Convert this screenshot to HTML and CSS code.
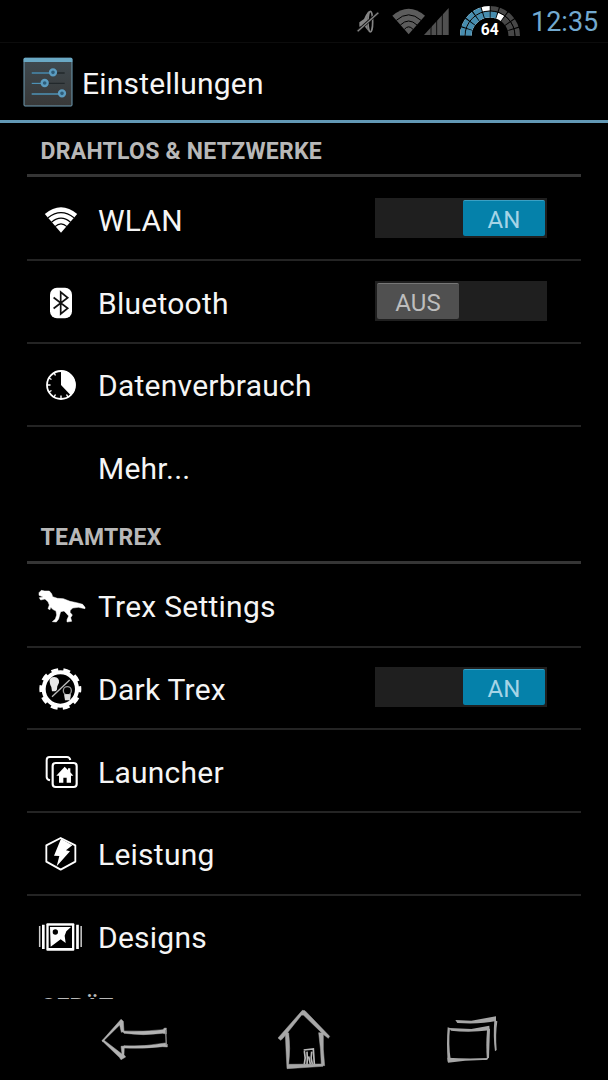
FILE: index.html
```html
<!DOCTYPE html>
<html lang="de">
<head>
  <meta charset="UTF-8">
  <meta name="viewport" content="width=device-width, initial-scale=1.0">
  <title>Einstellungen</title>
  <link rel="stylesheet" href="styles.css">
</head>
<body>
  <div class="screen">

    <div class="status-bar">
      <svg class="status-icons" viewBox="0 0 540 129">
        <!-- muted speaker -->
        <g fill="#858585">
          <path d="M58 67L72 57Q78 42 84 35L88 34Q78 60 84 92L73 78L58 80Z"/>
          <ellipse cx="91" cy="65" rx="7" ry="31" fill="none" stroke="#858585" stroke-width="5"/>
          <path d="M52 94L115 38" stroke="#111" stroke-width="9"/>
          <path d="M53 94L115 38" stroke="#858585" stroke-width="4"/>
        </g>
        <!-- wifi -->
        <path d="M206 103L157 47Q206 5 255 47Z" fill="#5c5c5c"/>
        <g fill="none" stroke="#000" stroke-width="3">
          <path d="M169 61Q206 28 243 61"/>
          <path d="M181 75Q206 51 231 75"/>
          <path d="M193 88Q206 73 219 88"/>
        </g>
        <!-- signal -->
        <path d="M252 105L326 24V105Z" fill="#505050"/>
        <path d="M273 70V106M290 50V106M307 30V106" stroke="#000" stroke-width="2.5"/>
        <!-- battery gauge -->
        <g fill="none">
          <path d="M367 108A83 83 0 0 1 533 108" stroke="#474747" stroke-width="14"/>
          <path d="M367 108A83 83 0 0 1 533 108" stroke="#fff" stroke-width="14" pathLength="100" stroke-dasharray="50 100"/>
          <path d="M367 108A83 83 0 0 1 533 108" stroke="#478daf" stroke-width="14" pathLength="100" stroke-dasharray="40 100"/>
          <path d="M385 108A65 65 0 0 1 515 108" stroke="#474747" stroke-width="19"/>
          <path d="M385 108A65 65 0 0 1 515 108" stroke="#fff" stroke-width="19" pathLength="100" stroke-dasharray="70 100"/>
          <path d="M385 108A65 65 0 0 1 515 108" stroke="#478daf" stroke-width="19" pathLength="100" stroke-dasharray="60 100"/>
          <path d="M376 108A74 74 0 0 1 524 108" stroke="#000" stroke-width="40" pathLength="100" stroke-dasharray="1.2 8.8" stroke-dashoffset=".6"/>
          <path d="M375 108A75 75 0 0 1 525 108" stroke="#000" stroke-width="3"/>
        </g>
        <text class="gauge-text" x="449" y="104" text-anchor="middle">64</text>
      </svg>
      <span class="clock">12:35</span>
    </div>

    <div class="action-bar">
      <svg class="app-icon" viewBox="0 0 150 150">
        <defs>
          <linearGradient id="panel" x1="0" y1="0" x2="0" y2="1">
            <stop offset="0" stop-color="#3f4a50"/>
            <stop offset="1" stop-color="#383838"/>
          </linearGradient>
        </defs>
        <rect x="3" y="4" width="144" height="143" rx="3" fill="url(#panel)" stroke="#6f9cb3" stroke-width="3"/>
        <path d="M2 6Q2 2 6 2H144Q148 2 148 6V15H2Z" fill="#6aa9c5"/>
        <path d="M26 48H125M26 79H125" stroke="#22282b" stroke-width="4"/>
        <path d="M26 48H85M26 79H60M26 111H112" stroke="#4e91b5" stroke-width="4"/>
        <g fill="#2e5c78" stroke="#5b9cc0" stroke-width="7">
          <circle cx="90" cy="46" r="9"/>
          <circle cx="65" cy="78" r="9"/>
          <circle cx="117" cy="109" r="9"/>
        </g>
      </svg>
      <h1 class="title">Einstellungen</h1>
    </div>

    <div class="settings">
      <h2 class="category">DRAHTLOS &amp; NETZWERKE</h2>
      <div class="row">
        <svg class="icon" viewBox="-28 -28 56 56">
          <path d="M0 12.8L-16.2 -6Q0 -19.5 16.2 -6Z" fill="#fff"/>
          <g fill="none" stroke="#000" stroke-width="1.2">
            <path d="M-13 -2.3Q0 -12.5 13 -2.3"/>
            <path d="M-9.5 2.2Q0 -5.8 9.5 2.2"/>
            <path d="M-6 6.6Q0 1 6 6.6"/>
          </g>
        </svg>
        <span class="label">WLAN</span>
        <span class="switch on"><span class="thumb">AN</span></span>
      </div>
      <div class="row">
        <svg class="icon" viewBox="-28 -28 56 56">
          <rect x="-11" y="-15.2" width="22" height="30.4" rx="7" fill="#fff"/>
          <path d="M-7.4 -5.5L6.7 5.2L-.3 11V-11L6.7 -5.2L-7.4 5.5" fill="none" stroke="#111" stroke-width="1.7"/>
        </svg>
        <span class="label">Bluetooth</span>
        <span class="switch"><span class="thumb">AUS</span></span>
      </div>
      <div class="row">
        <svg class="icon" viewBox="-28 -28 56 56">
          <circle cx="0" cy="0" r="14" fill="none" stroke="#fff" stroke-width="1.8"/>
          <path d="M0 0V-14.5A14.5 14.5 0 0 1 10 10.5Z" fill="#fff"/>
          <path d="M-14 0H-10.5M0 14V10.5M-7 -12.1L-5.5 -9.5M-12.1 -7L-9.5 -5.5M-12.1 7L-9.5 5.5M-7 12.1L-5.5 9.5M7 12.1L5.5 9.5" stroke="#fff" stroke-width="1.4"/>
        </svg>
        <span class="label">Datenverbrauch</span>
      </div>
      <div class="row last">
        <span class="icon"></span>
        <span class="label">Mehr...</span>
      </div>

      <h2 class="category">TEAMTREX</h2>
      <div class="row">
        <svg class="icon" viewBox="39 189 168 168">
          <path d="M57 233L64 226L74 228L88 228L95 236L98 245L112 250L130 251L150 259L170 263L188 268L195 277V281L175 277L158 279L151 286L150 292L157 300L152 308L155 319L141 321V314L146 303L138 294L132 288L122 290L119 300L116 312L109 321L97 320L106 312L110 300L108 288L98 283L92 276L90 284L84 281L88 270L84 260L75 252L62 255L58 248L70 246L57 241Z" fill="#fff" stroke="#fff" stroke-width="1.5"/>
        </svg>
        <span class="label">Trex Settings</span>
      </div>
      <div class="row">
        <svg class="icon" viewBox="39 33 168 168">
          <g fill="none" stroke="#fff">
            <circle cx="121" cy="117" r="50" stroke-width="12"/>
            <circle cx="121" cy="117" r="57.5" stroke-width="11" pathLength="100" stroke-dasharray="5.6 4.4" stroke-dashoffset="2.8"/>
          </g>
          <path d="M89 96Q87 81 103 81Q119 83 117 98L112 109L110 124H96L94 111Q90 105 89 96Z" fill="#e8e8e8"/>
          <path d="M149 90L96 140" stroke="#000" stroke-width="9"/>
          <path d="M149 90L96 140" stroke="#bbb" stroke-width="4"/>
          <circle cx="142" cy="122" r="12" fill="none" stroke="#999" stroke-width="4"/>
          <path d="M132 133H153L150 151H135Z" fill="#ddd"/>
        </svg>
        <span class="label">Dark Trex</span>
        <span class="switch on"><span class="thumb">AN</span></span>
      </div>
      <div class="row">
        <svg class="icon" viewBox="39 282 168 168">
          <path d="M90 391Q80 389 80 381V330Q80 321 89 321H141Q149 321 151 330" fill="none" stroke="#fff" stroke-width="6"/>
          <rect x="98" y="339" width="72" height="72" rx="9" fill="none" stroke="#fff" stroke-width="6.5"/>
          <path d="M134 350L144 360V355H151V367L160 377H153V398H140V383H130V398H117V377H109Z" fill="#fff"/>
        </svg>
        <span class="label">Launcher</span>
      </div>
      <div class="row">
        <svg class="icon" viewBox="39 18 168 168">
          <path d="M122 54L166 76V125L122 149L79 125V76Z" fill="none" stroke="#fff" stroke-width="5.5" stroke-linejoin="round"/>
          <path d="M123 56L157 76L138 91L150 94L110 139L118 108L102 107Z" fill="#fff"/>
        </svg>
        <span class="label">Leistung</span>
      </div>
      <div class="row last">
        <svg class="icon" viewBox="39 267 168 168">
          <path d="M59 318V381M183.500 318V381" stroke="#ccc" stroke-width="4.500"/>
          <path d="M70 314V387M172.500 314V387" stroke="#fff" stroke-width="8"/>
          <rect x="79" y="310" width="84" height="82" rx="3" fill="#fff"/>
          <rect x="86" y="317" width="70" height="67" fill="#000"/>
          <path d="M90 321H153L139 334L134 347L137 369L122 358L92 380Z" fill="#fff"/>
          <circle cx="106" cy="336" r="8" fill="#000"/>
        </svg>
        <span class="label">Designs</span>
      </div>

      <h2 class="category">GERÄT</h2>
    </div>

    <div class="nav-bar">
      <svg class="nav-icon back" viewBox="0 0 210 200">
        <g fill="#b3b3b3" stroke="#b3b3b3" stroke-width="1.5">
          <path d="M6 83L63 19L70 25L72 56L64 58L59 36L8 86Z"/>
          <path d="M6 83L10 80L66 123L63 100L73 99L72 125L77 132L63 140L58 133Z"/>
          <path d="M68 54Q130 57 189 50L192 46L199 45V63L188 61Q130 69 72 61Z"/>
          <path d="M72 98Q135 102 196 90L202 94V102L188 101Q130 108 72 105Z"/>
        </g>
        <path d="M197 51L199 97" stroke="#8e8e8e" stroke-width="4"/>
      </svg>
      <svg class="nav-icon home" viewBox="0 0 180 200">
        <g fill="#a8a8a8" stroke="#a8a8a8" stroke-width="1.5">
          <path d="M12 75L85 -8L93 -7L167 70L163 76L149 65L89 7L83 6L27 76L20 82Z"/>
          <path d="M38 58L44 60Q50 106 44 154L148 153L147 160L39 167Q36 115 34 63Z"/>
          <path d="M134 59L148 60Q146 108 152 158L142 156Q141 110 134 59Z"/>
        </g>
        <path d="M89 111L118 108L121 154M91 114Q96 134 91 154M99 116Q101 139 99 154M104 130L109 153M113 116Q109 134 115 153" fill="none" stroke="#b9b9b9" stroke-width="5"/>
      </svg>
      <svg class="nav-icon recent" viewBox="0 0 180 200">
        <g fill="#a6a6a6">
          <path d="M34 21L82 23L156 10V24Q110 34 40 30Z"/>
          <path d="M151 22L160 25Q154 65 158 111L153 115Q147 72 151 22Z"/>
          <path d="M15 45L82 48L136 38L137 52Q75 60 21 53Z"/>
          <path d="M11 43L18 45Q13 93 20 139L11 146Q7 90 11 43Z"/>
          <path d="M129 50L138 47L135 133L129 141Q125 99 129 50Z"/>
          <path d="M10 134Q70 138 131 135L128 141Q68 140 12 149Z"/>
        </g>
      </svg>
    </div>

  </div>
</body>
</html>
```
FILE: styles.css
```css
body {
  margin: 0;
  background-color: #000;
  color: #f5f5f5;
  font-family: Roboto, "Noto Sans", sans-serif;
}
.screen {
  display: flex;
  flex-direction: column;
  width: 608px;
  height: 1080px;
  overflow: hidden;
}

/* status bar */
.status-bar {
  display: flex;
  justify-content: flex-end;
  height: 43px;
  box-sizing: border-box;
  padding-right: 10px;
  border-bottom: 1px solid #0c0c0c;
}
.status-icons {
  width: 180px;
  height: 43px;
  margin-right: 11px;
}
.gauge-text {
  fill: #fff;
  font-size: 47px;
  font-weight: bold;
}
.clock {
  width: 67px;
  color: #72a9cf;
  font-size: 27px;
  line-height: 45px;
  white-space: nowrap;
}

/* title */
.action-bar {
  display: flex;
  align-items: center;
  height: 80px;
  box-sizing: border-box;
  padding-left: 23px;
  border-bottom: 3px solid #6298b5;
}
.app-icon {
  width: 50px;
  height: 50px;
}
.title {
  margin: 4px 0 0 9px;
  font-size: 30px;
  font-weight: normal;
  letter-spacing: 0.2px;
}

/* list */
.settings {
  height: 876px;
  padding: 0 27px;
  overflow: hidden;
}
.category {
  height: 54.4px;
  box-sizing: border-box;
  margin: 0 0 1px;
  padding-left: 13.5px;
  border-bottom: 3px solid #353535;
  color: #b8b8b8;
  font-size: 23px;
  font-weight: bold;
  letter-spacing: 0.25px;
  line-height: 58px;
}
.row {
  display: flex;
  align-items: center;
  height: 82.75px;
  box-sizing: border-box;
  padding-right: 34px;
  border-bottom: 2px solid #242424;
}
.row.last {
  border-bottom-color: transparent;
}
.icon {
  width: 56px;
  height: 56px;
  margin: 2px 0 0 6px;
}
.label {
  flex: 1;
  margin: 3px 0 0 9px;
  font-size: 30px;
  letter-spacing: 0.25px;
}
.switch {
  display: flex;
  width: 172px;
  height: 40px;
  box-sizing: border-box;
  margin-bottom: 1px;
  padding: 2px;
  background-color: #1f1f1f;
}
.switch.on {
  justify-content: flex-end;
}
.thumb {
  width: 82px;
  height: 36px;
  box-sizing: border-box;
  border-top: 1px solid #777;
  border-radius: 2px;
  background-color: #505050;
  color: #bdbdbd;
  font-size: 24px;
  line-height: 38px;
  text-align: center;
}
.switch.on .thumb {
  border-top-color: #3aa0c4;
  background-color: #0581aa;
  color: #a5d4e6;
}

/* navigation */
.nav-bar {
  display: flex;
  flex: 1;
  align-items: flex-end;
}
.nav-icon {
  height: 66.67px;
  overflow: visible;
}
.back {
  width: 70px;
  margin-left: 100px;
}
.home {
  width: 60px;
  margin-left: 104px;
}
.recent {
  width: 60px;
  margin-left: 110px;
}
```
